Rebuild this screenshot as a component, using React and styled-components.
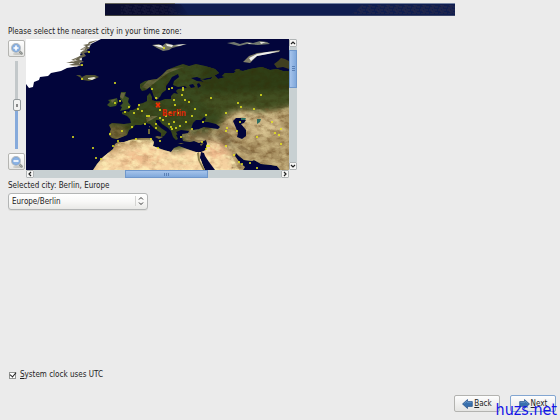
import React from "react";
import styled, { createGlobalStyle } from "styled-components";

const cities = [
  [115, 83], [120, 101], [115, 103], [129, 107], [139, 105], [125, 112],
  [134, 113], [138, 109], [142, 111], [147, 116], [149, 116], [132, 127],
  [122, 131], [110, 134], [145, 124], [156, 124], [156, 128], [152, 89],
  [156, 98], [169, 89], [172, 88], [183, 88], [183, 90], [182, 95],
  [174, 100], [175, 105], [185, 100], [189, 102], [195, 109], [178, 113],
  [186, 122], [174, 122], [160, 118], [163, 120], [169, 124], [171, 127],
  [172, 129], [176, 128], [180, 126], [192, 116], [192, 129], [160, 110],
  [211, 98], [238, 103], [241, 107], [261, 95], [254, 109], [226, 113],
  [206, 115], [272, 122], [281, 129], [164, 48], [227, 128], [226, 131],
  [237, 131], [226, 146], [240, 122], [257, 137], [275, 133], [279, 135],
  [281, 144], [207, 146], [209, 146], [206, 149], [202, 142], [203, 122],
  [181, 137], [160, 141], [234, 155], [239, 162], [242, 164], [250, 163],
  [257, 168], [158, 148], [73, 137], [93, 148], [96, 158], [101, 159],
  [113, 146], [118, 141], [136, 139], [151, 139], [89, 52], [82, 65],
  [82, 79], [166, 116], [170, 113]
];

const Europe =
  "M289 71L283 71L277 69L270 70L262 67L250 69L243 71L237 70L234 73L225 73L222 76L226 77L218 79L214 75L211 79L205 80L200 79L204 82L197 81L191 78L197 77L202 79L212 77L219 73L215 69L205 66L196 64L189 66L183 64L177 66L167 70L162 75L157 79L150 80L145 81L140 84L140 88L142 91L146 90L150 87L152 91L154 97L156 99L160 97L162 93L166 90L166 86L169 82L172 77L178 74L179 77L174 81L173 85L178 87L185 86L187 88L178 89L176 91L178 94L174 93L171 96L171 99L165 99L160 101L155 101L152 100L152 97L150 93L147 96L147 101L143 103L139 104L137 108L133 110L130 110L129 112L126 111L122 112L122 114L127 116L130 119L131 123L124 124L112 123L109 125L111 129L109 135L112 138L117 139L122 137L127 135L129 130L133 128L135 125L141 125L146 123L150 124L155 129L161 133L161 137L164 136L167 132L161 128L156 123L156 120L159 120L162 124L168 128L171 131L173 137L176 140L178 139L176 135L179 134L182 137L183 141L190 142L194 141L199 143L206 140L207 143L206 150L201 152L196 152L187 149L179 146L174 148L171 152L164 150L158 148L153 146L154 142L151 138L141 138L133 139L124 142L118 142L115 144L113 149L108 153L102 158L97 164L93 170L205 170L202 163L200 156L202 157L205 162L209 166L213 170L243 170L245 167L240 163L235 156L236 153L239 156L244 160L252 161L254 160L261 164L271 165L277 166L280 170L289 170Z";

const Waters =
  "M191 129L193 123L196 120L201 120L204 117L206 118L204 122L208 122L216 124L220 127L218 129L211 128L204 127L199 129L193 130ZM233 121L236 118L241 118L246 120L244 123L241 124L246 130L246 136L242 139L237 137L238 133L236 128ZM189 85L193 84L195 87L191 88ZM197 84L199 83L201 86L198 88ZM176 132L181 130L189 131L188 133L182 134L182 138L179 137Z";

const Globe = () => (
  <svg viewBox="26 39 263 131" role="img" aria-label="World map">
    <defs>
      <clipPath id="land">
        <path d={Europe} />
      </clipPath>
      <filter id="soft" x="-30%" y="-30%" width="160%" height="160%" colorInterpolationFilters="sRGB">
        <feGaussianBlur stdDeviation="3" />
      </filter>
      <filter id="terrain" x="0" y="0" width="100%" height="100%" colorInterpolationFilters="sRGB">
        <feTurbulence type="fractalNoise" baseFrequency=".14 .2" numOctaves="4" seed="8" />
        <feColorMatrix values="0 0 0 0 .2  0 0 0 0 .18  0 0 0 0 .04  1.9 0 0 0 -.75" />
      </filter>
      <filter id="rock" x="0" y="0" width="100%" height="100%" colorInterpolationFilters="sRGB">
        <feTurbulence type="fractalNoise" baseFrequency=".14 .2" numOctaves="4" seed="5" />
        <feColorMatrix values="0 0 0 0 .45  0 0 0 0 .33  0 0 0 0 .17  2.4 0 0 0 -1.05" />
      </filter>
      <filter id="sand" x="0" y="0" width="100%" height="100%" colorInterpolationFilters="sRGB">
        <feTurbulence type="fractalNoise" baseFrequency=".1 .16" numOctaves="4" seed="21" />
        <feColorMatrix values="0 0 0 0 1  0 0 0 0 .94  0 0 0 0 .72  0 3 0 0 -1.2" />
      </filter>
      <clipPath id="north">
        <path d="M90 60H290V107L262 110L236 111L224 122L206 130L180 131L170 150L150 134L90 140Z" />
      </clipPath>
      <clipPath id="east">
        <path d="M180 130L222 124L236 111L290 106V171H232L228 146L210 140H180Z" />
      </clipPath>
      <clipPath id="desert">
        <path d="M85 171L109 150L125 140H156L172 150L202 151L207 141L226 146L240 171Z" />
      </clipPath>
    </defs>
    <rect x="26" y="39" width="263" height="131" fill="#02053b" />
    <g clipPath="url(#land)">
      <rect x="90" y="39" width="200" height="132" fill="#394a1f" />
      <g filter="url(#soft)">
        <path d="M205 60L295 60L295 92L200 92Z" fill="#2f3d15" />
        <path d="M196 97L295 90L295 112L220 116Z" fill="#435022" />
        <path d="M218 127L226 115L242 109L262 112L295 106L295 178L210 178L205 140Z" fill="#ab9364" />
        <path d="M229 112L262 113L280 119L280 133L250 136Z" fill="#cab383" />
        <path d="M182 133L222 130L240 145L230 150L184 142Z" fill="#81704a" />
        <path d="M105 125L125 126L127 138L108 140Z" fill="#77683a" />
        <path d="M80 180L105 149L128 141L153 140L175 151L212 140L228 148L240 180Z" fill="#f5d19f" />
        <path d="M110 143L128 138L152 137L150 141L123 147L105 155Z" fill="#b5925e" />
        <path d="M130 153L158 151L160 162L119 166Z" fill="#f0bd8d" />
        <path d="M208 146L222 143L229 155L210 159Z" fill="#f0b98c" />
      </g>
      <path d="M142 87L153 75L168 69L184 67L168 73L157 81L147 89Z" fill="#7c7650" opacity=".65" />
      <path d="M146 118L152 116L158 116L153 119L147 122Z" fill="#817b51" opacity=".8" />
      <path d="M222 131L230 134L239 144L249 150L260 153L246 154L235 146Z" fill="#806841" opacity=".6" />
      <g clipPath="url(#north)">
        <rect x="90" y="60" width="200" height="110" filter="url(#terrain)" opacity=".6" />
      </g>
      <g clipPath="url(#east)">
        <rect x="180" y="105" width="110" height="66" filter="url(#rock)" opacity=".7" />
        <rect x="180" y="105" width="110" height="66" filter="url(#sand)" opacity=".35" />
      </g>
      <g clipPath="url(#desert)">
        <rect x="85" y="138" width="155" height="33" filter="url(#rock)" opacity=".25" />
        <rect x="85" y="138" width="155" height="33" filter="url(#sand)" opacity=".8" />
      </g>
    </g>
    <path d={Waters} fill="#02053b" />
    <path d="M201 152L204 153L205 156L209 162L215 170L206 170L203 163L200 158Z" fill="#02053b" />
    <path d="M199 152L200 161L205 170L203 170L198 160L197 153Z" fill="#8c7d4a" />
    <path d="M241 118L246 118L245 120L241 120ZM257 119L261 119L260 122L257 124Z" fill="#2e6d60" />
    <path d="M121 92L126 92L125 96L129 98L128 102L131 106L129 109L120 111L122 107L120 106L123 103L120 98ZM113 99L117 98L118 102L116 106L110 107L107 105L110 102L108 100Z" fill="#3e5223" />
    <path d="M121 93L125 93L123 99L120 97ZM111 100L116 99L112 103Z" fill="#686740" />
    <path d="M163 137L159 139L155 137L157 136ZM148 129L150 129L150 134L148 134ZM149 126L150 126L150 128ZM178 143L184 143L181 144ZM200 144L204 143L201 146ZM156 97L159 98L156 100Z" fill="#6f6938" />
    <path d="M26 39H101L91 44L89 48L80 54L82 59L79 66L67 68L61 71L51 73L48 76L40 77L39 80L34 82L33 87L29 88L26 84Z" fill="#fff" />
    <path d="M98 40L89 42L88 44L83 45L86 46L80 50L84 50L80 53L83 54L78 57L71 60L78 60L66 63L75 63L69 65L78 66L83 66L79 63L84 62L79 59L86 56L84 53L90 52L86 50L90 48L87 46L92 45L89 44Z" fill="#69644e" />
    <path d="M81 49L86 47L84 51ZM70 62L77 58L74 62ZM71 65L80 65L76 67Z" fill="#b5afa0" />
    <path d="M76 75L80 75L82 77L86 75L95 75L99 77L95 79L89 81L83 80L81 78Z" fill="#4f5131" />
    <path d="M88 78L94 77L96 78L92 80L88 79Z" fill="#e4e4d6" />
    <path d="M152 45L159 44L162 46L166 43L173 45L187 44L180 46L172 48L169 50L163 51L157 48Z" fill="#777967" />
    <path d="M153 45L161 45L164 48L159 47ZM166 44L173 45L172 47L167 46ZM175 45L186 44L179 46Z" fill="#f1f1ed" />
    <path d="M227 43L234 42L240 44L247 42L253 43L260 41L267 42L270 44L258 45L247 44L239 46L231 44Z" fill="#73796e" />
    <path d="M248 43L252 43L249 44ZM260 42L266 42L261 44Z" fill="#e6e6dc" />
    <path d="M243 62L249 56L257 53L267 52L280 50L279 52L267 54L257 56L253 60L250 63Z" fill="#827f68" />
    <path d="M249 58L257 54L267 52L280 51L268 54L257 56L251 61Z" fill="#eee" />
    <path d="M274 64L278 61L281 58L285 59L289 61V69L283 67L277 68Z" fill="#403f20" />
    <path d="M236 69L240 69L239 71L234 71Z" fill="#333a19" />
    {cities.map(([x, y], i) => (
      <circle key={i} cx={x} cy={y} r="1" fill="#e9ea1b" />
    ))}
    <path d="M156 103L160 107M160 103L156 107" stroke="#ff2b00" strokeWidth="1.6" />
    <path d="M156 103H160M156 107H160" stroke="#e83a0b" strokeWidth=".7" />
    <CityName x="162" y="116">Berlin</CityName>
  </svg>
);

const ZoomIcon = ({ plus }) => (
  <svg width="14" height="14" viewBox="0 0 14 14" aria-hidden="true">
    <ellipse cx="8" cy="12" rx="5" ry="1" fill="#c7c7c3" />
    <path d="M8.6 8.6L11.6 11.4" stroke="#858987" strokeWidth="2.4" strokeLinecap="round" />
    <path d="M9 8.8L11.3 11" stroke="#c1c4c2" strokeWidth=".8" strokeLinecap="round" />
    <circle cx="6" cy="6" r="4.4" fill="#8db4e5" stroke="#b7bdc3" strokeWidth="1.2" />
    <circle cx="6" cy="6" r="3.6" fill="none" stroke="#719fd8" strokeWidth=".6" />
    <path d={plus ? "M3.5 6H8.5M6 3.5V8.5" : "M3.5 6H8.5"} stroke="#fff" strokeWidth="1.6" />
  </svg>
);

const Arrow = ({ next }) => (
  <svg width="11" height="10" viewBox="0 0 11 10" aria-hidden="true">
    <path
      d={next ? "M10.5 5L5.5 .5V2.6H.7V7.4H5.5V9.5Z" : "M.5 5L5.5 .5V2.6H10.3V7.4H5.5V9.5Z"}
      fill="#3970ad"
      stroke="#244f86"
      strokeWidth=".7"
    />
    <path d={next ? "M1.3 3.4H6V2L8.7 4.5" : "M9.7 3.4H5V2L2.3 4.5"} fill="none" stroke="#75a3d4" strokeWidth=".6" />
  </svg>
);

const arrows = {
  up: "M2 5L4 3L6 5",
  down: "M2 3L4 5L6 3",
  left: "M5 2L3 4L5 6",
  right: "M3 2L5 4L3 6"
};

const Step = ({ to }) => (
  <StepButton type="button" aria-label={`Scroll ${to}`}>
    <svg width="8" height="8" viewBox="0 0 8 8">
      <path d={arrows[to]} fill="none" stroke="#222" strokeWidth="1.2" />
    </svg>
  </StepButton>
);

export default function App() {
  const [zoom, setZoom] = React.useState(50);
  const [zone, setZone] = React.useState("Europe/Berlin");
  const [utc, setUtc] = React.useState(true);
  const [region, city] = zone.split("/");

  return (
    <React.Fragment>
      <GlobalStyle />
      <Page>
        <Banner>
          <svg width="100%" height="13" viewBox="0 0 350 13" preserveAspectRatio="none" aria-hidden="true">
            <defs>
              <pattern id="mesh" width="9" height="6" patternUnits="userSpaceOnUse">
                <path d="M0 1H3V3H6M4 1H8M1 5H5M6 4H9" stroke="#292a48" fill="none" />
              </pattern>
              <linearGradient id="shade">
                <stop offset=".7" stopColor="#0a0d30" />
                <stop offset="1" stopColor="#0f1d50" />
              </linearGradient>
            </defs>
            <path d="M0 0H75L85 13H0Z" fill="url(#shade)" />
            <path d="M16 2H63L76 11H16Z" fill="url(#mesh)" opacity=".55" />
            <path d="M257 2H350V11H247Z" fill="url(#mesh)" />
            <path d="M0 .5H350" stroke="#7584a4" />
            <path d="M0 .5H70" stroke="#65665d" />
            <path d="M0 12.5H350" stroke="#3f4869" />
            <path d="M0 12.5H125" stroke="#454643" />
          </svg>
        </Banner>
        <Content>
          <Text>Please select the nearest city in your time zone:</Text>
          <MapPanel>
            <ZoomBar>
              <ZoomButton type="button" aria-label="Zoom in" onClick={() => setZoom(Math.min(100, zoom + 10))}>
                <ZoomIcon plus />
              </ZoomButton>
              <ZoomSlider
                type="range"
                aria-label="Zoom"
                value={zoom}
                onChange={e => setZoom(Number(e.target.value))}
              />
              <ZoomButton type="button" aria-label="Zoom out" onClick={() => setZoom(Math.max(0, zoom - 10))}>
                <ZoomIcon />
              </ZoomButton>
            </ZoomBar>
            <MapView>
              <Globe />
            </MapView>
            <ScrollBar $vertical>
              <Step to="up" />
              <Trough $vertical $before={3} $after={75}>
                <Handle $vertical />
              </Trough>
              <Step to="down" />
            </ScrollBar>
            <BottomBar>
              <Step to="left" />
              <Trough $before={91} $after={73}>
                <Handle />
              </Trough>
              <Step to="right" />
            </BottomBar>
          </MapPanel>
          <CityText>
            Selected city: {city}, {region}
          </CityText>
          <SelectWrapper>
            <Select aria-label="Time zone" value={zone} onChange={e => setZone(e.target.value)}>
              <option>Europe/Berlin</option>
            </Select>
            <SelectArrows width="12" height="10" viewBox="0 0 12 10" aria-hidden="true">
              <path d="M.5 0V10" stroke="#d5d5d3" />
              <path d="M4 3.5L6 1.5L8 3.5M4 6.5L6 8.5L8 6.5" fill="none" stroke="#333" />
            </SelectArrows>
          </SelectWrapper>
        </Content>
        <ClockLabel>
          <Checkbox type="checkbox" checked={utc} onChange={e => setUtc(e.target.checked)} />
          <span>
            <u>S</u>ystem clock uses UTC
          </span>
        </ClockLabel>
        <Footer>
          <Button type="button">
            <Arrow />
            <span>
              <u>B</u>ack
            </span>
          </Button>
          <Button type="button" $primary>
            <Arrow next />
            <span>
              <u>N</u>ext
            </span>
          </Button>
        </Footer>
        <SiteMark>huzs.net</SiteMark>
      </Page>
    </React.Fragment>
  );
}

const GlobalStyle = createGlobalStyle`
  * {
    box-sizing: border-box;
  }

  body {
    margin: 0;
    background: #ebebeb;
  }

  body, button, select {
    color: #222;
    font-family: "DejaVu Sans Condensed", "DejaVu Sans", sans-serif;
    font-size: 8px;
    line-height: 12px;
  }
`;

const Page = styled.div`
  position: relative;
  min-height: 100vh;
  display: flex;
  flex-direction: column;
`;

const Banner = styled.header`
  width: 62.5%;
  height: 13px;
  margin: 3px auto 10px;
  background: #0f1d50;

  svg {
    display: block;
  }
`;

const Content = styled.main`
  flex: 1;
  padding: 0 8px;
`;

const Text = styled.div`
  margin-bottom: 1px;
`;

const CityText = styled.div`
  margin: 2px 0 1px;
`;

const MapPanel = styled.div`
  display: grid;
  grid-template-columns: 18px 1fr 8px;
  max-width: 289px;
`;

const ZoomBar = styled.div`
  display: flex;
  flex-direction: column;
  align-items: center;
  justify-content: space-between;
  gap: 4px;
  padding: 1px 1px 0 0;
`;

const ZoomButton = styled.button`
  width: 17px;
  height: 17px;
  flex-shrink: 0;
  display: flex;
  align-items: center;
  justify-content: center;
  padding: 0;
  border: 1px solid #b5b5b2;
  border-radius: 2px;
  background: linear-gradient(#fff, #e6e6e4);
`;

const ZoomSlider = styled.input`
  appearance: none;
  writing-mode: vertical-lr;
  direction: rtl;
  width: 9px;
  flex: 1;
  min-height: 0;
  margin: 0;
  background: linear-gradient(#c3c8ca 50%, #86aadb 50%) center / 3px 100% no-repeat;

  &::-webkit-slider-thumb {
    appearance: none;
    width: 8px;
    height: 12px;
    border: 1px solid #949a9c;
    border-radius: 2px;
    background: linear-gradient(#8a8a8a, #8a8a8a) center / 2px 3px no-repeat, #f2f2f1;
  }
`;

const MapView = styled.div`
  svg {
    display: block;
    width: 100%;
  }
`;

const CityName = styled.text`
  fill: #d82505;
  font-size: 8px;
  font-weight: bold;
`;

const ScrollBar = styled.div`
  display: flex;
  flex-direction: ${props => (props.$vertical ? "column" : "row")};
`;

const BottomBar = styled(ScrollBar)`
  grid-column: 2;
`;

const StepButton = styled.button`
  width: 8px;
  height: 8px;
  flex-shrink: 0;
  padding: 0;
  border: 0;
  border-radius: 1px;
  outline: 1px solid #b0b4b5;
  outline-offset: -1px;
  background: #f6f6f5;

  svg {
    display: block;
  }
`;

const Trough = styled.div`
  flex: 1;
  display: grid;
  background: #c8d0d2;
  ${props => (props.$vertical ? "grid-template-rows" : "grid-template-columns")}:
    ${props => props.$before}fr ${props => (props.$vertical ? 38 : 83)}fr ${props => props.$after}fr;
`;

const Handle = styled.div`
  ${props => (props.$vertical ? "grid-row" : "grid-column")}: 2;
  border: 1px solid #6f97cb;
  background:
    repeating-linear-gradient(${props => (props.$vertical ? "0deg" : "90deg")}, #5b80b5 0 1px, transparent 1px 2px)
      center / ${props => (props.$vertical ? "3px 5px" : "5px 3px")} no-repeat,
    linear-gradient(${props => (props.$vertical ? "90deg" : "180deg")}, #a5c3eb, #80a8db);
`;

const SelectWrapper = styled.div`
  position: relative;
  width: 25%;
  min-width: 140px;
`;

const Select = styled.select`
  appearance: none;
  width: 100%;
  height: 17px;
  padding: 0 14px 0 3px;
  border: 1px solid #b3b5b5;
  border-radius: 3px;
  background: linear-gradient(#fff, #f8f8f7 50%, #e9e9e7);
  box-shadow: 0 1px #dededc;
`;

const SelectArrows = styled.svg`
  position: absolute;
  right: 1px;
  top: 3px;
  pointer-events: none;
`;

const ClockLabel = styled.label`
  display: flex;
  align-items: center;
  align-self: flex-start;
  gap: 4px;
  margin: 0 9px 14px;
`;

const Checkbox = styled.input`
  appearance: none;
  width: 7px;
  height: 7px;
  margin: 0;
  border: 1px solid #929492;
  background: #fff;
  position: relative;

  &:checked::after {
    content: "";
    position: absolute;
    left: 1px;
    bottom: 1px;
    width: 3px;
    height: 5px;
    border: solid #222;
    border-width: 0 1px 1px 0;
    transform: rotate(40deg);
  }
`;

const Footer = styled.footer`
  display: flex;
  justify-content: flex-end;
  gap: 10px;
  padding: 0 4px 8px;
`;

const Button = styled.button`
  width: 46px;
  height: 17px;
  display: flex;
  align-items: center;
  justify-content: center;
  gap: 1px;
  padding: 0;
  border: 1px solid ${props => (props.$primary ? "#83a6d1" : "#b3b3b0")};
  border-radius: 2px;
  background: linear-gradient(#fdfdfd, #e5e5e3);
`;

const SiteMark = styled.div`
  position: absolute;
  right: 3px;
  bottom: 0;
  color: #1414e6;
  font-size: 16px;
  line-height: 20px;
  pointer-events: none;
`;
